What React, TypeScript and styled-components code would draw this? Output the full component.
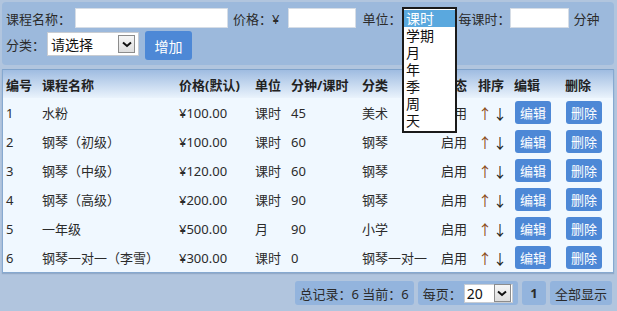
import React from 'react';
import styled, {createGlobalStyle} from 'styled-components';

const GlobalStyle = createGlobalStyle`
    body {
        margin: 0;
        background: #b1c5de;
        font-family: "Noto Sans", "Noto Sans CJK SC", sans-serif;
        font-size: 13px;
        color: #2b2b2b;
    }
`;

const Page = styled.div`
    width: 617px;
    height: 311px;
    padding: 2px 3px 0 2px;
    box-sizing: border-box;
    position: relative;
`;

const FormPanel = styled.div`
    background: #9cb9dc;
    border-radius: 4px;
    padding: 5px 4px 4px 4px;
    height: 63px;
    box-sizing: border-box;
    display: flex;
    flex-direction: column;
    gap: 4px;
`;

const FormRow = styled.div`
    display: flex;
    align-items: center;
    height: 22px;
`;

const Label = styled.span<{$ml?: number}>`
    margin-left: ${p => p.$ml ?? 0}px;
    white-space: nowrap;
`;

const TextInput = styled.div<{$w: number; $ml?: number}>`
    width: ${p => p.$w}px;
    height: 20px;
    box-sizing: border-box;
    background: #fff;
    border: 1px solid #d6dde6;
    margin-left: ${p => p.$ml ?? 3}px;
`;

const Spacer = styled.div<{$w: number}>`
    width: ${p => p.$w}px;
    flex: none;
`;

const SelectBox = styled.div<{$w: number}>`
    width: ${p => p.$w}px;
    height: 24px;
    box-sizing: border-box;
    background: #fff;
    border: 1px solid #c8ccd2;
    display: flex;
    align-items: center;
    justify-content: space-between;
    padding: 0 3px 0 3px;
    margin-left: 2px;
    font-size: 14px;
    color: #111;
`;

const ArrowBox = styled.span`
    width: 17px;
    height: 18px;
    box-sizing: border-box;
    border: 1px solid #8c8c8c;
    background: linear-gradient(#f6f6f6, #dedede);
    display: flex;
    align-items: center;
    justify-content: center;
`;

const AddButton = styled.button`
    margin-left: 6px;
    margin-top: 3px;
    width: 47px;
    height: 29px;
    border: none;
    border-radius: 3px;
    background: #4d88d6;
    color: #fff;
    font-family: inherit;
    font-size: 14px;
    padding: 0;
`;

const ListBox = styled.div`
    position: absolute;
    left: 402px;
    top: 7px;
    width: 55px;
    box-sizing: border-box;
    border: 2px solid #1a1a1a;
    background: #fff;
    padding: 1px 0 2px 0;
    z-index: 10;
`;

const ListItem = styled.div<{$active?: boolean}>`
    height: 17px;
    line-height: 17px;
    padding-left: 2px;
    font-size: 14px;
    color: ${p => (p.$active ? '#fff' : '#111')};
    background: ${p => (p.$active ? '#5aa8de' : 'transparent')};
`;

const TablePanel = styled.div`
    margin-top: 4px;
    border: 1px solid #86a9d0;
    border-top-color: #7fa3cc;
    background: #f0f8ff;
    box-shadow: 0 1px 1px rgba(60, 90, 130, 0.25);
`;

const Table = styled.table`
    border-collapse: collapse;
    table-layout: fixed;
    width: 100%;
`;

const Th = styled.th<{$w?: number}>`
    width: ${p => (p.$w ? `${p.$w}px` : 'auto')};
    height: 28px;
    padding: 0 0 0 3px;
    text-align: left;
    font-weight: bold;
    white-space: nowrap;
    background: linear-gradient(#9fbce1, #eaf3fc);
    color: #222;
`;

const Td = styled.td`
    height: 29px;
    padding: 0 0 0 3px;
    white-space: nowrap;
    overflow: hidden;
`;

const Arrows = styled.span`
    letter-spacing: 1px;
    font-size: 14px;
    color: #222;
    & > span:first-child {
        color: #8a4a12;
    }
`;

const SmallButton = styled.button`
    width: 36px;
    height: 23px;
    border: none;
    border-radius: 3px;
    background: #4d88d6;
    color: #fff;
    font-family: inherit;
    font-size: 13px;
    padding: 0;
    margin-left: 1px;
    vertical-align: middle;
`;

const Pager = styled.div`
    display: flex;
    justify-content: flex-end;
    gap: 4px;
    margin-top: 8px;
    padding-right: 2px;
`;

const PagerBox = styled.div<{$bold?: boolean}>`
    height: 24px;
    padding: 0 5px;
    border-radius: 3px;
    background: #93b4dd;
    display: flex;
    align-items: center;
    font-weight: ${p => (p.$bold ? 'bold' : 'normal')};
    white-space: nowrap;
`;

const PageSelect = styled(SelectBox)`
    height: 19px;
    margin-left: 2px;
    font-size: 14px;
    padding: 0 1px 0 2px;
`;

const Chevron = () => (
    <svg width="10" height="7" viewBox="0 0 10 7">
        <path d="M1 1.5 L5 5 L9 1.5" fill="none" stroke="#111" strokeWidth="2" />
    </svg>
);

const units = ['课时', '学期', '月', '年', '季', '周', '天'];

const rows = [
    ['1', '水粉', '¥100.00', '课时', '45', '美术'],
    ['2', '钢琴（初级）', '¥100.00', '课时', '60', '钢琴'],
    ['3', '钢琴（中级）', '¥120.00', '课时', '60', '钢琴'],
    ['4', '钢琴（高级）', '¥200.00', '课时', '90', '钢琴'],
    ['5', '一年级', '¥500.00', '月', '90', '小学'],
    ['6', '钢琴一对一（李雪）', '¥300.00', '课时', '0', '钢琴一对一'],
];

export default function App() {
    return (
        <Page>
            <GlobalStyle />
            <FormPanel>
                <FormRow>
                    <Label>课程名称：</Label>
                    <TextInput $w={153} $ml={4} />
                    <Label $ml={5}>价格：¥</Label>
                    <TextInput $w={68} $ml={9} />
                    <Label $ml={6}>单位：</Label>
                    <Spacer $w={57} />
                    <Label>每课时：</Label>
                    <TextInput $w={59} $ml={0} />
                    <Label $ml={4}>分钟</Label>
                </FormRow>
                <FormRow>
                    <Label>分类：</Label>
                    <SelectBox $w={92}>
                        请选择
                        <ArrowBox>
                            <Chevron />
                        </ArrowBox>
                    </SelectBox>
                    <AddButton>增加</AddButton>
                </FormRow>
            </FormPanel>
            <ListBox>
                {units.map((u, i) => (
                    <ListItem key={u} $active={i === 0}>
                        {u}
                    </ListItem>
                ))}
            </ListBox>
            <TablePanel>
                <Table>
                    <thead>
                        <tr>
                            <Th $w={33}>编号</Th>
                            <Th $w={134}>课程名称</Th>
                            <Th $w={73}>价格(默认)</Th>
                            <Th $w={33}>单位</Th>
                            <Th $w={68}>分钟/课时</Th>
                            <Th $w={76}>分类</Th>
                            <Th $w={34}>状态</Th>
                            <Th $w={33}>排序</Th>
                            <Th $w={48}>编辑</Th>
                            <Th>删除</Th>
                        </tr>
                    </thead>
                    <tbody>
                        {rows.map(r => (
                            <tr key={r[0]}>
                                {r.map((c, i) => (
                                    <Td key={i}>{c}</Td>
                                ))}
                                <Td>启用</Td>
                                <Td>
                                    <Arrows>
                                        <span>↑</span>
                                        <span>↓</span>
                                    </Arrows>
                                </Td>
                                <Td>
                                    <SmallButton>编辑</SmallButton>
                                </Td>
                                <Td>
                                    <SmallButton>删除</SmallButton>
                                </Td>
                            </tr>
                        ))}
                    </tbody>
                </Table>
            </TablePanel>
            <Pager>
                <PagerBox>总记录：6 当前：6</PagerBox>
                <PagerBox>
                    每页：
                    <PageSelect $w={49}>
                        20
                        <ArrowBox>
                            <Chevron />
                        </ArrowBox>
                    </PageSelect>
                </PagerBox>
                <PagerBox $bold>&nbsp;1&nbsp;</PagerBox>
                <PagerBox>全部显示</PagerBox>
            </Pager>
        </Page>
    );
}
